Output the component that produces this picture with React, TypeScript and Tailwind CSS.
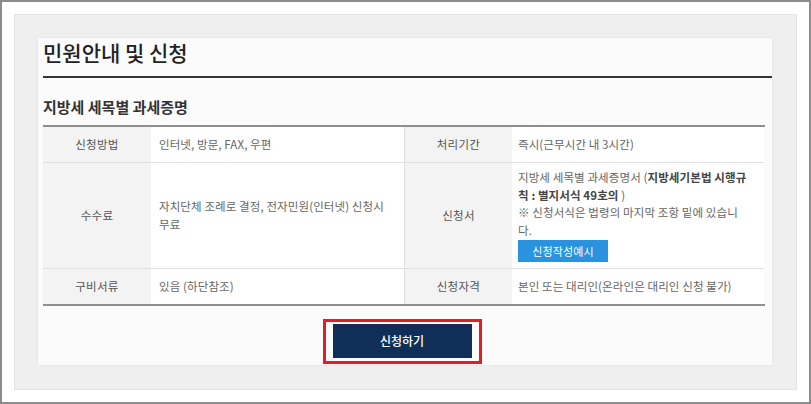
import React from 'react';

const font = { fontFamily: '"Noto Sans CJK KR", "Noto Sans", sans-serif' };

const Label = ({ children, divider }: { children: React.ReactNode; divider?: boolean }) => (
    <div className={`flex items-center justify-center bg-[#f3f3f3] text-[11.5px] tracking-[0.3px] text-[#555] ${divider ? 'border-l border-[#dedede]' : ''}`}>
        {children}
    </div>
);

const Value = ({ children, pl }: { children: React.ReactNode; pl: string }) => (
    <div className={`flex items-center bg-white text-[11.5px] leading-[17.5px] tracking-[0.1px] text-[#666] ${pl}`}>
        {children}
    </div>
);

export default function App() {
    return (
        <div className="w-[811px] h-[404px] border-2 border-[#8c8c8c] bg-white p-[12px]" style={font}>
            <div className="h-full border border-[#e2e2e2] bg-[#efefef] pl-[23px] pt-[23px]">
                <div className="w-[734px] h-[327px] bg-[#fbfbfb] pl-[5px] shadow-[0_0_2px_rgba(0,0,0,0.08)]">
                    {/* 제목 */}
                    <div className="border-b-2 border-[#333] pt-[2px] pb-[11px]">
                        <h1 className="text-[21px] leading-[25px] font-medium text-[#222]">민원안내 및 신청</h1>
                    </div>

                    <div className="mr-[7px]">
                        <h2 className="mt-[19px] text-[15px] leading-[20px] font-semibold text-[#333]">지방세 세목별 과세증명</h2>

                        <div className="mt-[8px] border-t-2 border-b-2 border-[#8f8f8f] grid grid-cols-[108px_253px_108px_252px] grid-rows-[35px_1px_105px_1px_35px]">
                            {/* row 1 */}
                            <Label>신청방법</Label>
                            <Value pl="pl-[8px]">인터넷, 방문, FAX, 우편</Value>
                            <Label divider>처리기간</Label>
                            <Value pl="pl-[6px]">즉시(근무시간 내 3시간)</Value>
                            <div className="col-span-4 bg-[#e0e0e0]" />

                            {/* row 2 */}
                            <Label>수수료</Label>
                            <Value pl="pl-[8px]">
                                <div>
                                    <div className="whitespace-nowrap">자치단체 조례로 결정, 전자민원(인터넷) 신청시</div>
                                    <div>무료</div>
                                </div>
                            </Value>
                            <Label divider>신청서</Label>
                            <Value pl="pl-[6px]">
                                <div>
                                    <div className="whitespace-nowrap">
                                        지방세 세목별 과세증명서 (<span className="font-bold text-[#444]">지방세기본법 시행규</span>
                                    </div>
                                    <div className="whitespace-nowrap">
                                        <span className="font-bold text-[#444]">칙 : 별지서식 49호의</span> )
                                    </div>
                                    <div className="whitespace-nowrap">※ 신청서식은 법령의 마지막 조항 밑에 있습니</div>
                                    <div>다.</div>
                                    <button className="mt-[1px] w-[90px] h-[22px] bg-[#2a93e0] text-white text-[11px] leading-[22px]">
                                        신청작성예시
                                    </button>
                                </div>
                            </Value>
                            <div className="col-span-4 bg-[#e0e0e0]" />

                            {/* row 3 */}
                            <Label>구비서류</Label>
                            <Value pl="pl-[8px]">있음 (하단참조)</Value>
                            <Label divider>신청자격</Label>
                            <Value pl="pl-[6px]">본인 또는 대리인(온라인은 대리인 신청 불가)</Value>
                        </div>

                        <div className="flex justify-center pt-[13px] pr-[4px]">
                            <div className="w-[159px] h-[45px] border-[3px] border-[#e11d25] px-[7px] pt-[2px] pb-[3px]">
                                <button className="w-full h-full bg-[#0f2f58] text-white text-[12px] font-medium">신청하기</button>
                            </div>
                        </div>
                    </div>
                </div>
            </div>
        </div>
    );
}
